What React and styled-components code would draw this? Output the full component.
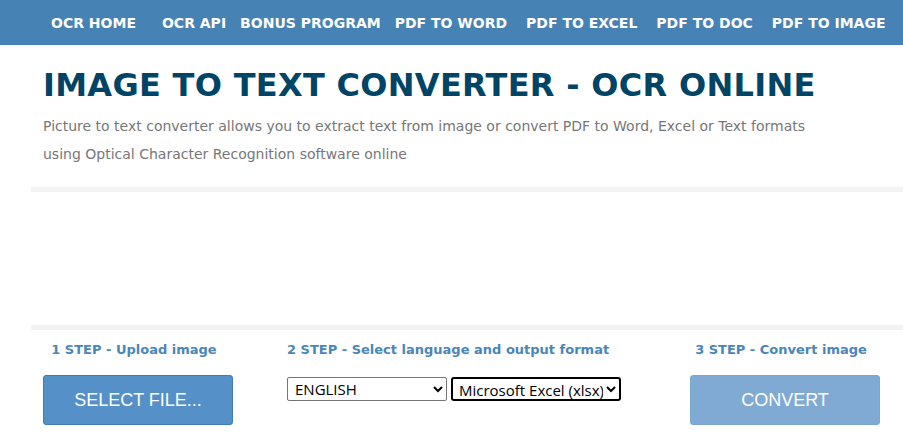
import React, { useState } from 'react'
import styled, { createGlobalStyle } from 'styled-components'

const GlobalStyle = createGlobalStyle`
  body {
    margin: 0;
    background: #fff;
    font-family: "DejaVu Sans", Verdana, sans-serif;
  }
`

const navLinks = ['OCR HOME', 'OCR API', 'BONUS PROGRAM', 'PDF TO WORD', 'PDF TO EXCEL', 'PDF TO DOC', 'PDF TO IMAGE']

const App = () => {
  const [lang, setLang] = useState('ENGLISH')
  const [format, setFormat] = useState('xlsx')

  return (
    <>
      <GlobalStyle />
      <Nav>
        {navLinks.map(l => (
          <NavLink key={l} href="#">{l}</NavLink>
        ))}
      </Nav>

      <Intro>
        <Title>IMAGE TO TEXT CONVERTER - OCR ONLINE</Title>
        <Lead>
          Picture to text converter allows you to extract text from image or convert PDF to Word, Excel or Text formats
          using Optical Character Recognition software online
        </Lead>
      </Intro>

      <Divider />
      <DropArea />
      <Divider />

      <Steps>
        <Step>
          <StepLabel $center>1 STEP - Upload image</StepLabel>
          <BigButton>SELECT FILE...</BigButton>
        </Step>
        <Step>
          <StepLabel>2 STEP - Select language and output format</StepLabel>
          <Selects>
            <Select $w="160px" value={lang} onChange={e => setLang(e.target.value)}>
              <option>ENGLISH</option>
              <option>GERMAN</option>
              <option>FRENCH</option>
            </Select>
            <Select $w="170px" $focused value={format} onChange={e => setFormat(e.target.value)}>
              <option value="docx">Microsoft Word (docx)</option>
              <option value="xlsx">Microsoft Excel (xlsx)</option>
              <option value="txt">Text Plain (txt)</option>
            </Select>
          </Selects>
        </Step>
        <Step>
          <StepLabel $center>3 STEP - Convert image</StepLabel>
          <BigButton $disabled>CONVERT</BigButton>
        </Step>
      </Steps>
    </>
  )
}

const Nav = styled.nav`
  display: flex;
  align-items: center;
  height: 45px;
  background: #4682b4;
  padding-left: 51px;
`

const NavLink = styled.a`
  color: #fff;
  text-decoration: none;
  font-weight: 700;
  font-size: 14px;
  white-space: nowrap;
  margin-left: 19px;
  &:first-child { margin-left: 0; }
  &:nth-child(2) { margin-left: 26px; }
  &:nth-child(3), &:nth-child(4) { margin-left: 14px; }
`

const Intro = styled.section`
  padding: 20px 0 0 43px;
  height: 142px;
  box-sizing: border-box;
`

const Title = styled.h1`
  margin: 0;
  color: #004466;
  font-size: 32px;
  font-weight: 700;
  letter-spacing: 0.3px;
  line-height: 40px;
`

const Lead = styled.p`
  margin: 7px 0 0;
  width: 790px;
  color: #777;
  font-size: 14px;
  line-height: 28px;
`

const Divider = styled.div`
  height: 5px;
  margin-left: 31px;
  background: #f3f3f3;
`

const DropArea = styled.div`
  height: 133px;
`

const Steps = styled.div`
  display: grid;
  grid-template-columns: 190px 1fr 190px;
  column-gap: 54px;
  padding: 10px 23px 0 43px;
`

const Step = styled.div`
  display: flex;
  flex-direction: column;
`

const StepLabel = styled.div`
  color: #4a86b8;
  font-weight: 700;
  font-size: 13px;
  line-height: 20px;
  white-space: nowrap;
  text-align: ${p => (p.$center ? 'center' : 'left')};
  margin-left: ${p => (p.$center ? '-8px' : '0')};
`

const BigButton = styled.button`
  margin-top: 15px;
  height: 50px;
  width: 190px;
  border: 1px solid ${p => (p.$disabled ? '#7ba6d0' : '#3f7db5')};
  border-radius: 3px;
  background: ${p => (p.$disabled ? '#80aad4' : '#5590c8')};
  color: #fff;
  font-family: "Liberation Sans", Arial, sans-serif;
  font-size: 18px;
  cursor: ${p => (p.$disabled ? 'default' : 'pointer')};
  padding: 0;
`

const Selects = styled.div`
  display: flex;
  gap: 4px;
  margin-top: 17px;
`

const Select = styled.select`
  width: ${p => p.$w};
  height: 24px;
  font-family: "Open Sans", "Noto Sans", sans-serif;
  font-size: 15px;
  color: #000;
  background: #fff;
  border: ${p => (p.$focused ? '2px solid #000' : '1px solid #767676')};
  border-radius: ${p => (p.$focused ? '3px' : '2px')};
  padding: 0 0 0 ${p => (p.$focused ? '2px' : '3px')};
`

export default App
